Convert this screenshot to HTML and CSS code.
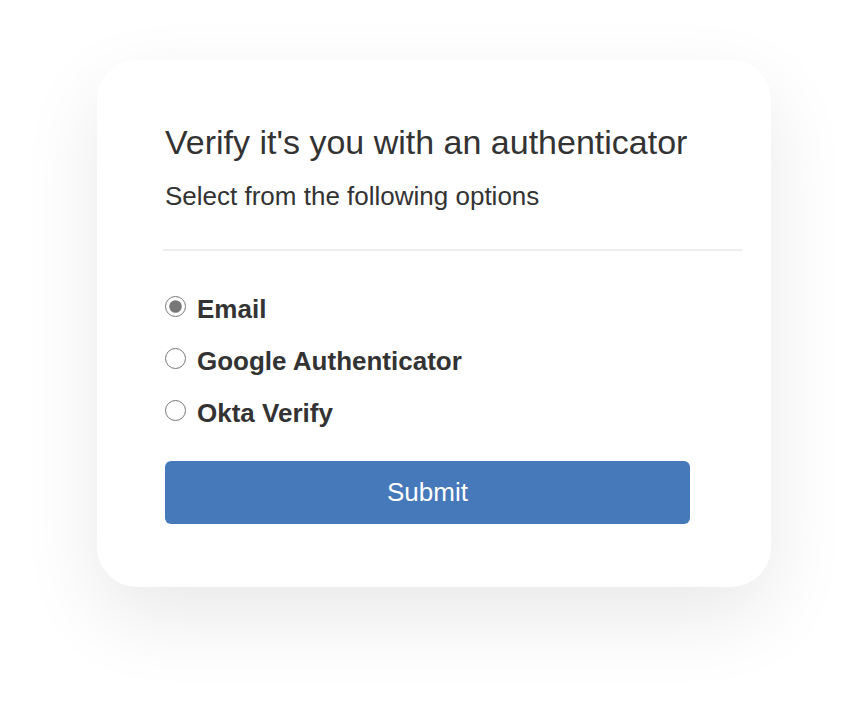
FILE: index.html
```html
<!DOCTYPE html>
<html>
<head>
<meta charset="utf-8">
<link rel="stylesheet" href="styles.css">
</head>
<body>
<div class="card">
  <h1 class="title">Verify it's you with an authenticator</h1>
  <p class="subtitle">Select from the following options</p>
  <hr class="divider">
  <form class="options">
    <label class="option"><input type="radio" name="auth" checked><span>Email</span></label>
    <label class="option"><input type="radio" name="auth"><span>Google Authenticator</span></label>
    <label class="option"><input type="radio" name="auth"><span>Okta Verify</span></label>
    <button type="button" class="submit">Submit</button>
  </form>
</div>
</body>
</html>
```
FILE: styles.css
```css
html, body {
  margin: 0;
  padding: 0;
  background: #fff;
}
body {
  padding: 60px 0 0 97px;
  min-height: 721px;
  box-sizing: border-box;
  font-family: "Liberation Sans", Arial, sans-serif;
  color: #333;
}
.card {
  box-sizing: border-box;
  width: 674px;
  height: 527px;
  background: #fff;
  border-radius: 40px;
  box-shadow: 0 30px 80px rgba(0,0,0,0.09);
  padding: 62px 29px 0 68px;
}
.title {
  margin: 0;
  font-size: 34px;
  font-weight: normal;
  line-height: 40px;
  color: #333;
}
.subtitle {
  margin: 19px 0 0;
  font-size: 26px;
  line-height: 30px;
  color: #333;
}
.divider {
  border: 0;
  border-top: 2px solid #eee;
  margin: 38px 0 0 -2px;
}
.options {
  display: flex;
  flex-direction: column;
  margin-top: 32px;
}
.option {
  display: flex;
  align-items: center;
  height: 52px;
  font-size: 26px;
  font-weight: bold;
  color: #333;
}
.option input {
  margin: 0 11px 6px 0;
  width: 21px;
  height: 21px;
  accent-color: #777;
}
.submit {
  margin-top: 22px;
  width: 525px;
  height: 63px;
  background: #4679ba;
  color: #fff;
  border: 0;
  border-radius: 6px;
  font-family: "Liberation Sans", Arial, sans-serif;
  font-size: 26px;
}
```
